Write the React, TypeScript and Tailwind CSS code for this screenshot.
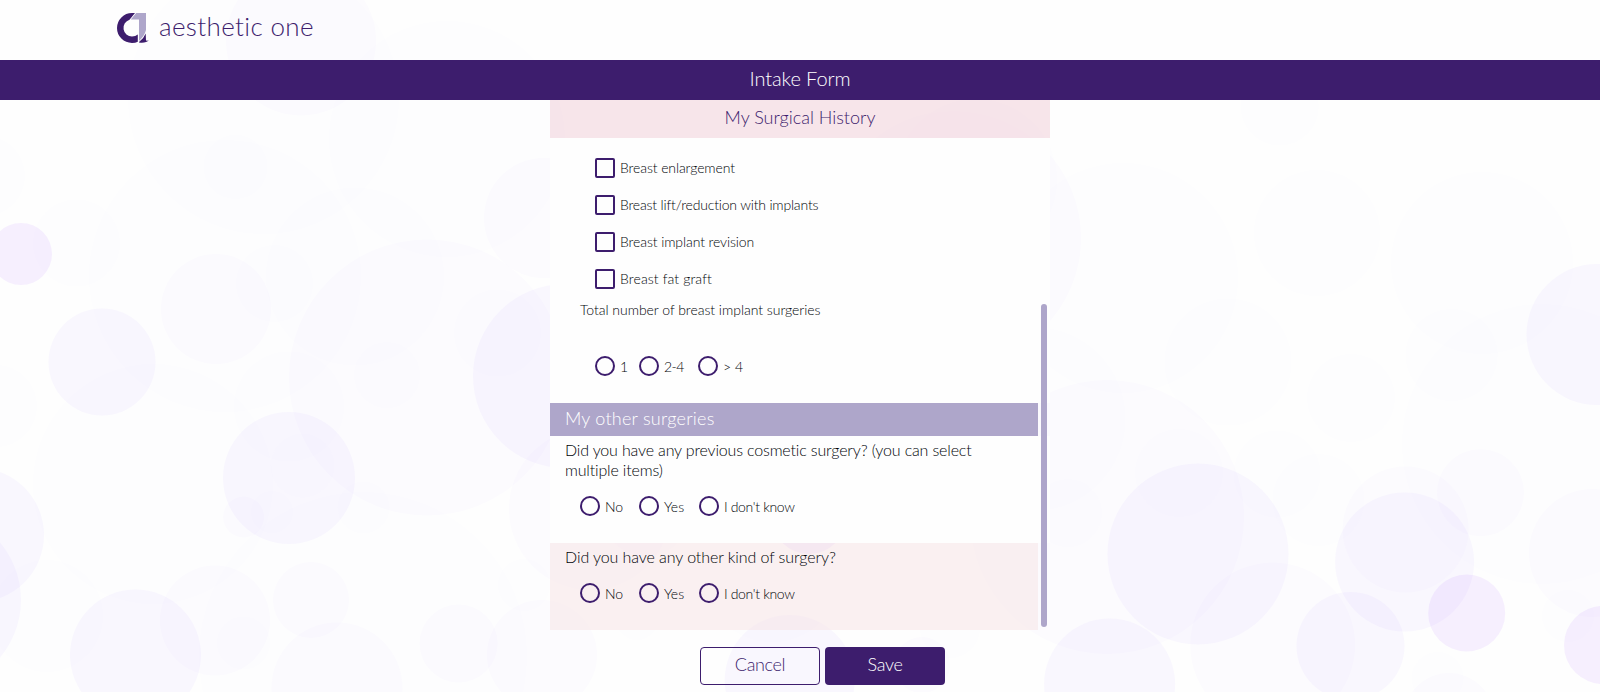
import React from "react";

type Tone = "faint" | "soft" | "mid" | "vivid";
const FILL: Record<Tone, [string, number]> = {
  faint: ["#8a50f0", 0.009],
  soft: ["#8a40ff", 0.017],
  mid: ["#8a58ff", 0.042],
  vivid: ["#a050ff", 0.088],
};
const BUBBLES: [number, number, number, Tone][] = [
  [21, 254, 31, "vivid"], [263.5, 98.5, 135.5, "faint"], [301, 40.5, 75, "soft"], [235.5, 167, 32, "faint"],
  [225, 276, 136, "faint"], [355, 276.5, 89, "faint"], [447, 139, 118, "faint"], [544, 218, 60, "soft"],
  [427, 377.5, 138, "soft"], [216, 309, 55, "soft"], [274.5, 283.5, 38.5, "faint"], [76.5, 243, 43.5, "faint"],
  [102, 362, 53.5, "mid"], [565, 376, 92, "mid"], [497.5, 333, 43.5, "faint"], [-15, 176, 40, "faint"],
  [153, 484, 120, "faint"], [-4, 406, 41, "faint"], [289, 406.5, 55, "faint"], [289, 478, 66, "mid"],
  [302.5, 465.7, 32, "faint"], [243.6, 517, 20.4, "soft"], [272, 512, 21, "faint"], [363.5, 507.5, 26, "faint"],
  [387, 375, 33, "faint"], [-23, 535, 67, "mid"], [-68, 600, 89, "mid"], [135.5, 655, 65.5, "mid"],
  [47, 616, 56, "faint"], [215, 620.5, 55, "soft"], [243.5, 643, 26.5, "faint"], [311, 600, 38, "soft"],
  [337, 688, 65.5, "soft"], [363, 656, 164, "faint"], [458.6, 643.5, 39, "soft"], [542, 655, 55, "soft"],
  [524, 585, 26, "faint"], [590, 509, 81, "soft"], [1279.7, 106.5, 39, "faint"], [1123, 278, 115, "faint"],
  [1317, 233, 63, "faint"], [1482, 263, 91, "faint"], [1228, 362, 63.5, "faint"], [1351, 398, 44, "faint"],
  [1451.6, 355, 46, "faint"], [1597, 334.5, 70.5, "mid"], [1542, 444, 140, "faint"], [954, 238, 127, "soft"],
  [976, 180, 81, "faint"], [1033.5, 419, 92, "faint"], [1107, 517, 137, "soft"], [1198, 554, 90.5, "mid"],
  [1179, 473, 44, "faint"], [1068, 513, 34, "faint"], [1109.6, 684, 65.5, "mid"], [1272.7, 645, 82.4, "soft"],
  [1350.5, 646, 54, "mid"], [1404.6, 562, 69.5, "mid"], [1405.6, 529.5, 63, "soft"], [1480.5, 492.7, 43.5, "soft"],
  [1318.5, 500, 46, "faint"], [1277, 474, 43.5, "faint"], [1466.7, 613, 38.5, "vivid"], [1603, 645, 39, "vivid"],
  [1593, 553, 64, "soft"], [1568, 616, 26, "faint"], [1437.6, 678, 26, "faint"], [1449, 718, 45, "soft"],
  [789.7, 680, 65, "mid"], [809, 517, 37, "vivid"], [637, 619, 21, "faint"], [922, 665, 28, "soft"],
  [772, 572, 70, "faint"], [950, 628, 30, "faint"], [646, 510, 46, "soft"],
];

function Bubbles() {
  return (
    <svg className="absolute inset-0 -z-10" width="1600" height="692" viewBox="0 0 1600 692" aria-hidden="true">
      {BUBBLES.map(([cx, cy, r, tone], i) => (
        <circle key={i} cx={cx} cy={cy} r={r} fill={FILL[tone][0]} fillOpacity={FILL[tone][1]} />
      ))}
    </svg>
  );
}

function Logo() {
  return (
    <div className="flex items-start pt-[13px] pl-[117px]">
      <svg width="33" height="30" viewBox="0 0 33 30">
        <path d="M18 0H15A15 15 0 0 0 15 30Q18.500 30 20.800 28.800V21.500Q18.500 23.500 15 23.500A8.600 8.600 0 0 1 12.500 6.700Z" fill="#3d1d6d" />
        <path d="M19.200 0H29V17Q27.500 23 22 28V6.500H13.800Z" fill="#aea6ca" />
        <path d="M22 29Q26.500 26 28.700 20.500L29 27.500Q31 28 32 27Q29 30.500 22 29.500Z" fill="#3d1d6d" />
      </svg>
      <span className="-mt-[5px] ml-[9px] text-[26px] leading-[36px] font-light tracking-[0.35px] text-[#3d1d6d]">aesthetic one</span>
    </div>
  );
}

function CheckRow({ label, tracking }: { label: string; tracking: string }) {
  return (
    <label className="flex h-[37px] items-start gap-[5px] pl-[45px]">
      <span className="size-5 rounded-[2px] border-2 border-[#3d1d6d]" />
      <span className={"text-[14px] leading-[20px] " + tracking}>{label}</span>
    </label>
  );
}

function Radio({ label, className }: { label: string; className?: string }) {
  return (
    <label className={"flex items-start gap-[5px] " + (className ?? "")}>
      <span className="size-5 rounded-full border-2 border-[#3d1d6d]" />
      <span className="pt-px text-[14px] leading-[20px] whitespace-nowrap">{label}</span>
    </label>
  );
}

function YesNo() {
  return (
    <div className="flex pl-[30px]">
      <Radio label="No" className="w-[59px]" />
      <Radio label="Yes" className="w-[60px]" />
      <Radio label="I don't know" className="tracking-[-0.35px]" />
    </div>
  );
}

export default function App() {
  return (
    <div className="relative isolate flex h-[692px] w-[1600px] flex-col overflow-hidden bg-[#fefefe] font-['Lato',sans-serif] font-light text-[#000408] [font-variant-ligatures:none]">
      <Bubbles />
      <header className="h-[60px]"><Logo /></header>
      <h1 className="h-10 bg-[#3d1d6d] text-center text-[20px] leading-[37px] font-light tracking-[-0.1px] text-white">Intake Form</h1>
      <main className="mx-auto flex w-[500px] flex-col">
        <h2 className="h-[38px] bg-[#f3d7df]/65 text-center text-[18px] leading-[35px] font-light text-[#3d1d6d]">My Surgical History</h2>
        <div className="relative flex h-[492px] flex-col pr-3">
          <div className="h-[265px] w-[500px] bg-[#fefefe] pt-[20px]">
            <CheckRow label="Breast enlargement" tracking="tracking-[-0.1px]" />
            <CheckRow label="Breast lift/reduction with implants" tracking="tracking-[-0.18px]" />
            <CheckRow label="Breast implant revision" tracking="tracking-[-0.1px]" />
            <CheckRow label="Breast fat graft" tracking="tracking-[0.12px]" />
            <p className="-mt-[6px] pl-[30px] text-[14px] leading-[20px] tracking-[-0.03px]">Total number of breast implant surgeries</p>
            <div className="mt-[36px] flex pl-[45px]">
              <Radio label="1" className="w-[44px] tracking-[-0.3px]" />
              <Radio label="2-4" className="w-[59px] tracking-[-0.5px]" />
              <Radio label="> 4" />
            </div>
          </div>
          <h3 className="h-[33px] bg-[#aea6ca] pl-[15px] text-[18px] leading-[31px] font-light tracking-[0.24px] text-white">My other surgeries</h3>
          <div className="h-[107px] w-[500px] bg-[#fefefe] px-[15px] pt-1">
            <p className="text-[16px] leading-[20px] tracking-[-0.16px]">Did you have any previous cosmetic surgery? (you can select<br />multiple items)</p>
            <div className="-ml-[15px] pt-4"><YesNo /></div>
          </div>
          <div className="h-[87px] bg-[#f6dfe3]/45 pt-1">
            <p className="pl-[15px] text-[16px] leading-[20px] tracking-[-0.08px]">Did you have any other kind of surgery?</p>
            <div className="pt-4"><YesNo /></div>
          </div>
          <div className="absolute top-[166px] right-[3px] h-[323px] w-[6px] rounded-full bg-[#aea6ca]" />
        </div>
        <div className="flex gap-[5px] pt-[17px] pl-[150px] text-[18px]">
          <button className="h-[38px] w-[120px] rounded-[4px] border border-[#3d1d6d] pb-[3px] tracking-[-0.35px] text-[#3d1d6d]">Cancel</button>
          <button className="h-[38px] w-[120px] rounded-[4px] bg-[#3d1d6d] pb-[3px] tracking-[-0.3px] text-white">Save</button>
        </div>
      </main>
    </div>
  );
}
